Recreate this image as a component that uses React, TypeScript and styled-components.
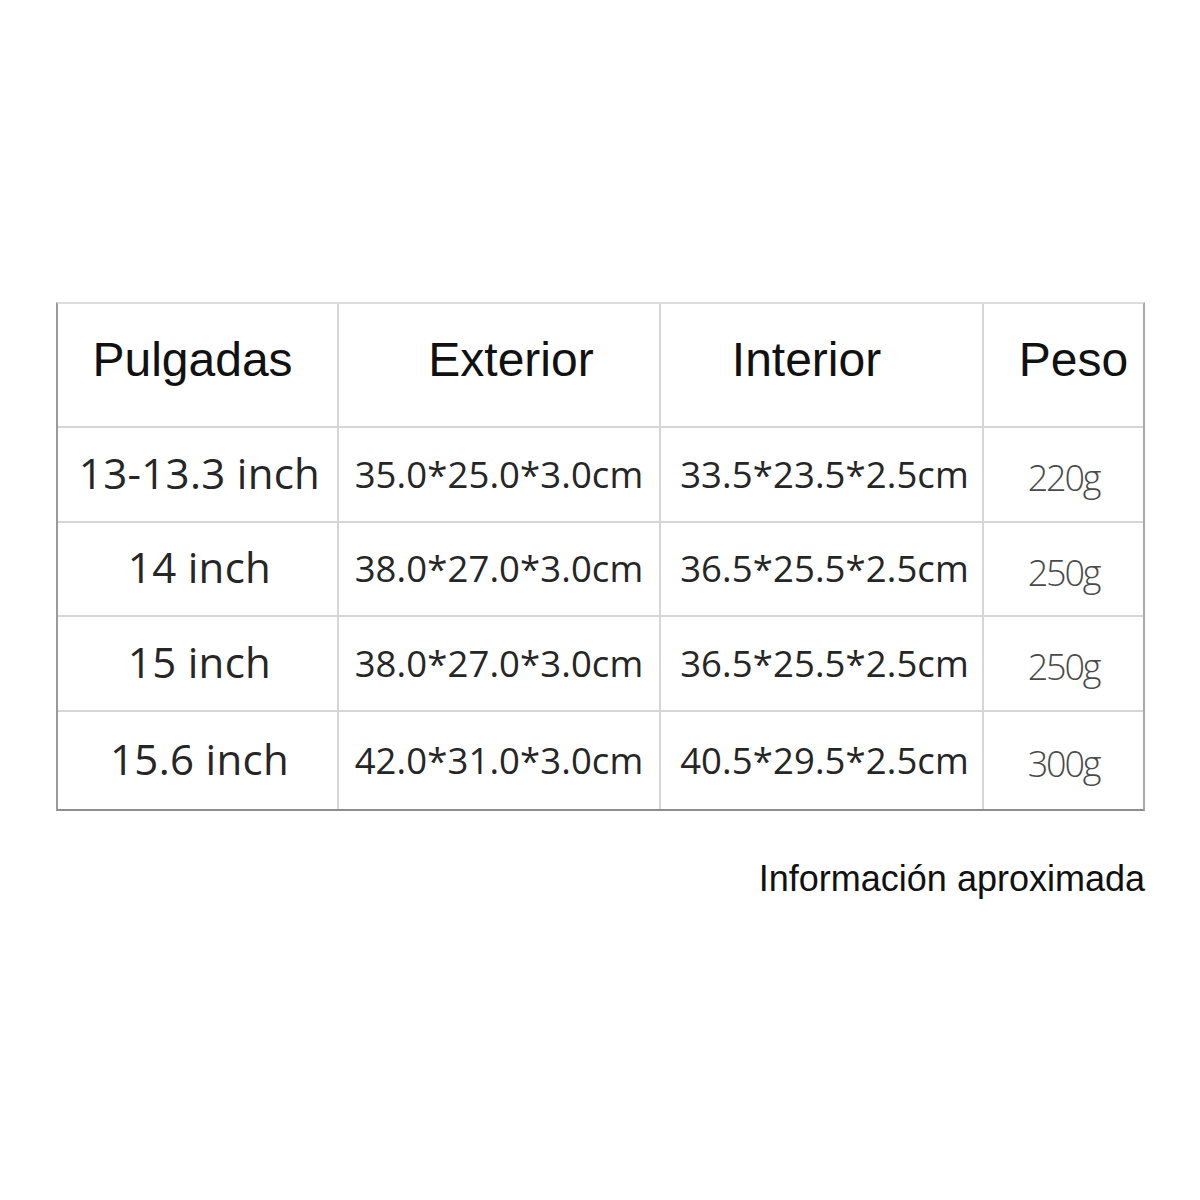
import React from "react";
import styled, { createGlobalStyle } from "styled-components";

const Global = createGlobalStyle`
  html, body { margin: 0; padding: 0; background: #ffffff; }
  body { width: 1200px; height: 1200px; }
`;

const Page = styled.div`
  width: 1200px;
  height: 1200px;
  box-sizing: border-box;
  padding: 302px 55px 0 56px;
  display: flex;
  flex-direction: column;
  align-items: stretch;
`;

const Table = styled.div`
  display: grid;
  grid-template-columns: 281px 322px 323px 1fr;
  grid-template-rows: 124px 95px 94px 95px 97px;
  border-top: 2px solid #dcdcdc;
  border-left: 2px solid #9a9a9a;
  border-right: 2px solid #a8a8a8;
  border-bottom: 2px solid #8e8e8e;
  background: #fff;
`;

const Cell = styled.div<{ $last?: boolean; $bottom?: boolean; $dx?: number }>`
  display: flex;
  align-items: center;
  justify-content: center;
  border-right: ${(p) => (p.$last ? "none" : "2px solid #d6d6d6")};
  border-bottom: ${(p) => (p.$bottom ? "none" : "2px solid #d6d6d6")};
  padding-left: ${(p) => Math.max(0, (p.$dx ?? 0) * 2)}px;
  padding-right: ${(p) => Math.max(0, -(p.$dx ?? 0) * 2)}px;
  box-sizing: border-box;
  white-space: nowrap;
`;

const HeadText = styled.span`
  font-family: "Liberation Sans", Arial, sans-serif;
  font-size: 48px;
  color: #111;
  margin-bottom: 12px;
`;

const SizeText = styled.span`
  font-family: "Open Sans", sans-serif;
  font-size: 42px;
  color: #262626;
  letter-spacing: 0.3px;
  margin-bottom: 5px;
`;

const DimText = styled.span`
  font-family: "Open Sans", sans-serif;
  font-size: 36.5px;
  color: #262626;
  letter-spacing: 0.1px;
  margin-bottom: 2px;
`;

const WeightText = styled.span`
  font-family: "Open Sans", sans-serif;
  font-weight: 300;
  font-size: 36px;
  color: #4a4a4a;
  letter-spacing: -2.2px;
  margin-top: 6px;
`;

const Note = styled.div`
  margin-top: 47px;
  align-self: flex-end;
  font-family: "Liberation Sans", Arial, sans-serif;
  font-size: 36px;
  color: #111;
`;

const rows = [
  { s: "13-13.3 inch", e: "35.0*25.0*3.0cm", i: "33.5*23.5*2.5cm", w: "220g" },
  { s: "14 inch", e: "38.0*27.0*3.0cm", i: "36.5*25.5*2.5cm", w: "250g" },
  { s: "15 inch", e: "38.0*27.0*3.0cm", i: "36.5*25.5*2.5cm", w: "250g" },
  { s: "15.6 inch", e: "42.0*31.0*3.0cm", i: "40.5*29.5*2.5cm", w: "300g" },
];

export default function App() {
  return (
    <>
      <Global />
      <Page>
        <Table>
          <Cell $dx={-5}><HeadText>Pulgadas</HeadText></Cell>
          <Cell $dx={12}><HeadText>Exterior</HeadText></Cell>
          <Cell $dx={-15}><HeadText>Interior</HeadText></Cell>
          <Cell $last $dx={10}><HeadText>Peso</HeadText></Cell>
          {rows.map((r, idx) => {
            const b = idx === rows.length - 1;
            return (
              <React.Fragment key={idx}>
                <Cell $bottom={b} $dx={2}><SizeText>{r.s}</SizeText></Cell>
                <Cell $bottom={b}><DimText>{r.e}</DimText></Cell>
                <Cell $bottom={b} $dx={3}><DimText>{r.i}</DimText></Cell>
                <Cell $bottom={b} $last><WeightText>{r.w}</WeightText></Cell>
              </React.Fragment>
            );
          })}
        </Table>
        <Note>Información aproximada</Note>
      </Page>
    </>
  );
}
